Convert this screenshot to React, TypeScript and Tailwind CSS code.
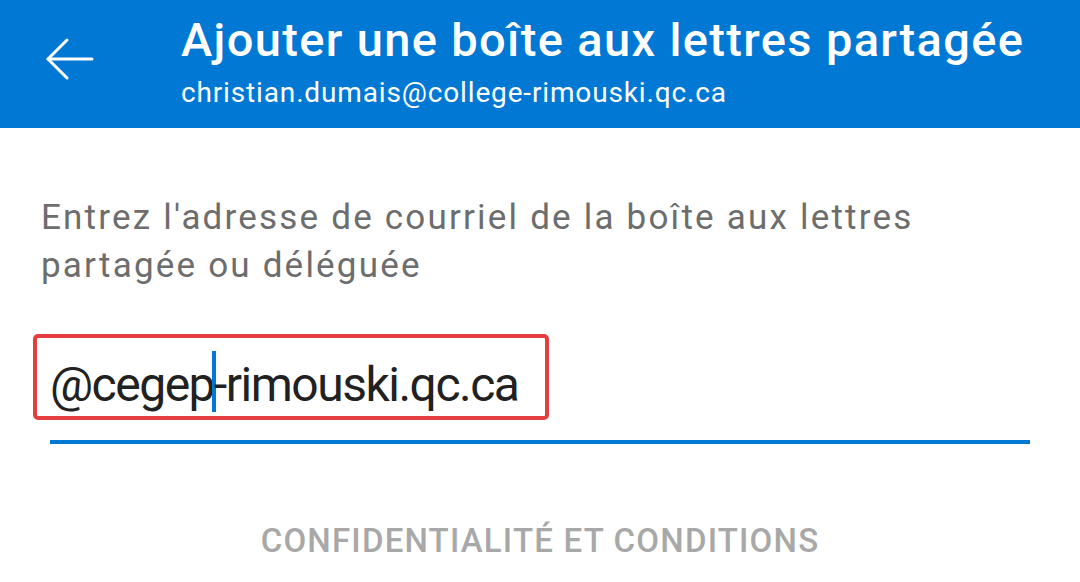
export default function App() {
  return (
    <div className="w-[1080px] h-[582px] bg-white overflow-hidden font-['Roboto',sans-serif]">
      <header className="h-[128px] bg-[#0078d4] flex items-start text-white">
        <div className="w-[181px] pt-[38px] pl-[46px]">
          <svg width="48" height="42" viewBox="0 0 48 42" fill="none" stroke="white" strokeWidth="3" strokeLinecap="round" strokeLinejoin="round">
            <path d="M2 21 H46" />
            <path d="M21 2 L2 21 L21 40" />
          </svg>
        </div>
        <div className="flex flex-col pt-[13px]">
          <h1 className="text-[47px] leading-[54px] font-medium tracking-[1.35px] whitespace-nowrap">Ajouter une boîte aux lettres partagée</h1>
          <p className="text-[28px] leading-[32px] mt-[10px] tracking-[0.85px] whitespace-nowrap">christian.dumais@college-rimouski.qc.ca</p>
        </div>
      </header>
      <main className="flex flex-col">
        <p className="pl-[41px] pr-[100px] pt-[66px] text-[35px] leading-[48px] text-[#6d6d6d] tracking-[2.2px]">
          Entrez l'adresse de courriel de la boîte aux lettres partagée ou déléguée
        </p>
        <div className="mt-[44px] ml-[33px] w-[516px] h-[86px] border-[4px] border-[#e53e3e] rounded-[5px] pl-[13px] pt-[13px]">
          <div className="text-[48px] leading-[66px] text-[#212121] tracking-[-1.5px] whitespace-nowrap">
            @cegep
            <span className="inline-block w-[4px] h-[61px] bg-[#0078d4] mx-[-2px] align-[-11px]" />
            -rimouski.qc.ca
          </div>
        </div>
        <div className="mt-[20px] ml-[50px] w-[980px] h-[4px] bg-[#0078d4]" />
        <div className="mt-[77px] flex justify-center">
          <span className="text-[33px] leading-[40px] font-medium text-[#a8a8a8] tracking-[1.2px]">CONFIDENTIALITÉ ET CONDITIONS</span>
        </div>
      </main>
    </div>
  );
}
